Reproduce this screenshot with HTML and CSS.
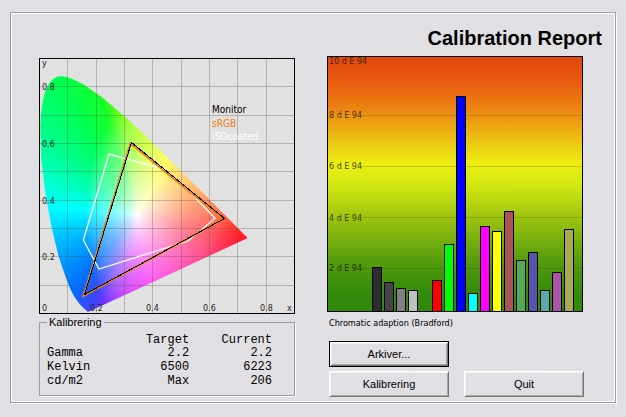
FILE: index.html
```html
<!DOCTYPE html>
<html lang="en">
<head>
<meta charset="utf-8">
<title>Calibration Report</title>
<link rel="stylesheet" href="styles.css">
</head>
<body>
<main class="frame">
  <h1 class="title">Calibration Report</h1>
  <div class="columns">
    <section class="column column-left">
      <svg class="chart" viewBox="0 0 256 256" role="img" aria-label="Chromaticity diagram">
        <defs>
          <clipPath id="locus">
            <path d="M49 254L46.7 252L44.5 250L41 246.6L35.2 238.6L31 230.3L26 217.3L19.5 198L13 171L6.7 137.8L2.3 102L1.3 69Q1.7 54 4 42Q6.5 30 11 24.4Q15.5 18.5 21 18.2Q26 18 32.4 20.4L44 26L65 40.8L85.7 58.4L106 77.6L126 97.5L145.5 116.8L163.4 134.5L178 149.2L208.7 180Z"/>
          </clipPath>
        </defs>
        <rect class="gamut-back" width="256" height="256"/>
        <g clip-path="url(#locus)">
          <foreignObject width="256" height="256"><div class="spectrum"></div></foreignObject>
        </g>
        <path class="grid" d="M28.5 0V256M57.5 0V256M85.5 0V256M113.5 0V256M142.5 0V256M170.5 0V256M198.5 0V256M227.5 0V256M0 28.5H256M0 57.5H256M0 85.5H256M0 113.5H256M0 142.5H256M0 170.5H256M0 198.5H256M0 227.5H256"/>
        <path class="iso" d="M70 96L44.300 182L60 211L149 183L176 160.300L146 129L121 110Z"/>
        <path class="srgb" d="M91.500 85.500L184 161L44.500 238Z"/>
        <path class="monitor" d="M92.500 84.500L185.500 160.500L45.500 236.500Z"/>
        <g class="axis">
          <text x="3" y="8">y</text>
          <text x="3" y="32">0.8</text>
          <text x="3" y="89">0.6</text>
          <text x="3" y="146">0.4</text>
          <text x="3" y="202">0.2</text>
          <text x="3" y="253">0</text>
          <text x="51" y="253">0.2</text>
          <text x="107" y="253">0.4</text>
          <text x="164" y="253">0.6</text>
          <text x="221" y="253">0.8</text>
          <text x="248" y="253">x</text>
        </g>
        <g class="legend">
          <text x="173" y="55">Monitor</text>
          <text class="legend-srgb" x="173" y="69">sRGB</text>
          <text class="legend-iso" x="173" y="82">ISOcoated</text>
        </g>
        <rect class="border" x=".5" y=".5" width="255" height="255"/>
      </svg>
      <fieldset class="group">
        <legend>Kalibrering</legend>
        <table class="values">
          <thead><tr><td></td><th scope="col">Target</th><th scope="col">Current</th></tr></thead>
          <tbody>
            <tr><th scope="row">Gamma</th><td>2.2</td><td>2.2</td></tr>
            <tr><th scope="row">Kelvin</th><td>6500</td><td>6223</td></tr>
            <tr><th scope="row">cd/m2</th><td>Max</td><td>206</td></tr>
          </tbody>
        </table>
      </fieldset>
    </section>
    <section class="column">
      <svg class="chart" viewBox="0 0 256 256" role="img" aria-label="Colour difference chart">
        <defs>
          <linearGradient id="scale" x1="0" y1="0" x2="0" y2="1">
            <stop offset="0" stop-color="#df4710"/>
            <stop offset=".1" stop-color="#ea5a10"/>
            <stop offset=".22" stop-color="#ec8b12"/>
            <stop offset=".33" stop-color="#ecc412"/>
            <stop offset=".42" stop-color="#ecee12"/>
            <stop offset=".5" stop-color="#d4e912"/>
            <stop offset=".63" stop-color="#9ec410"/>
            <stop offset=".8" stop-color="#559c0d"/>
            <stop offset=".93" stop-color="#328a0c"/>
            <stop offset="1" stop-color="#328a0c"/>
          </linearGradient>
        </defs>
        <rect width="256" height="256" fill="url(#scale)"/>
        <path class="levels" d="M32 59.500H256M32 110.500H256M32 161.500H256M32 212.500H256"/>
        <g class="axis axis-levels">
          <text x="2" y="8">10 d E 94</text>
          <text x="2" y="62">8 d E 94</text>
          <text x="2" y="113">6 d E 94</text>
          <text x="2" y="165">4 d E 94</text>
          <text x="2" y="215">2 d E 94</text>
        </g>
        <g class="bars">
          <rect x="45.500" y="211.500" width="9" height="44" fill="#2d2d2d"/>
          <rect x="57.500" y="226.500" width="9" height="29" fill="#444"/>
          <rect x="69.500" y="232.500" width="9" height="23" fill="#818181"/>
          <rect x="81.500" y="234.500" width="9" height="21" fill="#c0c0c0"/>
          <rect x="105.500" y="224.500" width="9" height="31" fill="#f00"/>
          <rect x="117.500" y="188.500" width="9" height="67" fill="#0f0"/>
          <rect x="129.500" y="40.500" width="9" height="215" fill="#00f"/>
          <rect x="141.500" y="237.500" width="9" height="18" fill="#0ff"/>
          <rect x="153.500" y="170.500" width="9" height="85" fill="#f0f"/>
          <rect x="165.500" y="175.500" width="9" height="80" fill="#ff0"/>
          <rect x="177.500" y="155.500" width="9" height="100" fill="#aa5555"/>
          <rect x="189.500" y="204.500" width="9" height="51" fill="#55aa55"/>
          <rect x="201.500" y="196.500" width="9" height="59" fill="#5555aa"/>
          <rect x="213.500" y="234.500" width="9" height="21" fill="#55aaaa"/>
          <rect x="225.500" y="216.500" width="9" height="39" fill="#aa55aa"/>
          <rect x="237.500" y="173.500" width="9" height="82" fill="#aaaa55"/>
        </g>
        <rect class="border" x=".5" y=".5" width="255" height="255"/>
      </svg>
      <p class="caption">Chromatic adaption (Bradford)</p>
      <div class="buttons">
        <button class="button button-default" type="button">Arkiver...</button>
        <button class="button button-second" type="button">Kalibrering</button>
        <button class="button" type="button">Quit</button>
      </div>
    </section>
  </div>
</main>
</body>
</html>
```
FILE: styles.css
```css
* {
  box-sizing: border-box;
}

body {
  margin: 0;
  padding: 12px 10px;
  background: #e0dfe3;
  color: #000;
  font: 11px/14px "Liberation Sans", Arial, sans-serif;
}

.frame {
  border: 1px solid #9d9da1;
  outline: 1px solid #fff;
  outline-offset: -2px;
  box-shadow: 1px 1px #fff;
  padding: 12px 13px 5px 28px;
}

.title {
  margin: 0 0 5px;
  font-size: 20px;
  line-height: 26px;
  text-align: right;
}

.columns {
  display: grid;
  grid-template-columns: 1fr 1fr;
  gap: 32px;
  padding-right: 19px;
}

.column-left {
  padding-top: 2px;
}

.chart {
  display: block;
  width: 100%;
  height: auto;
}

.gamut-back {
  fill: #e1e1e1;
}

.spectrum {
  width: 256px;
  height: 256px;
  background:
    radial-gradient(ellipse 52px 112px at 98px 157px, #fff 0, rgba(255, 255, 255, .76) 16%, rgba(255, 255, 255, .48) 45%, rgba(255, 255, 255, .26) 75%, transparent 100%) 0 0 / 98px 256px no-repeat,
    radial-gradient(ellipse 104px 112px at 0 157px, #fff 0, rgba(255, 255, 255, .76) 16%, rgba(255, 255, 255, .48) 45%, rgba(255, 255, 255, .26) 75%, transparent 100%) 98px 0 / 158px 256px no-repeat,
    conic-gradient(from 0deg at 98px 157px,
      #a0ff00 0deg, #d8ff00 15deg, #ffff00 29deg, #ffc010 48deg, #ff8c18 66deg,
      #ff4c20 88deg, #ff1c28 102deg, #ff0a64 122deg, #ff00b4 148deg,
      #fa00f0 168deg, #c800ff 186deg, #8228ff 198deg, #3c46ff 207deg,
      #006eff 220deg, #0096ff 236deg, #00c8ff 256deg, #00ffff 276deg,
      #00ffb4 298deg, #00ff50 330deg, #14ff28 343deg, #64ff14 350deg, #a0ff00 360deg);
}

.grid {
  fill: none;
  stroke: rgba(90, 85, 70, .32);
}

.iso,
.srgb,
.monitor {
  fill: none;
  stroke: #fff;
}

.iso {
  stroke-width: 1.3;
}

.srgb {
  stroke: #f08010;
  stroke-width: 2px;
}

.monitor {
  stroke: #000;
  shape-rendering: crispEdges;
}

.axis {
  fill: #26261c;
  font: 8px "DejaVu Sans", sans-serif;
}

.axis-levels {
  fill: rgba(20, 20, 0, .8);
}

.legend {
  font: 10px "DejaVu Sans Condensed", "DejaVu Sans", sans-serif;
}

.legend-srgb {
  fill: #f08010;
}

.legend-iso {
  fill: #fff;
}

.border {
  fill: none;
  stroke: #000;
}

.levels {
  stroke: rgba(60, 60, 0, .22);
}

.bars {
  stroke: #000;
}

.group {
  margin: 1px 0 0;
  padding: 5px 22px 7px 7px;
  border: 1px solid #9d9da1;
  box-shadow: 1px 1px #fff;
}

.group legend {
  padding: 0 2px;
}

.values {
  width: 100%;
  border-collapse: collapse;
  font: 12px/14px "Liberation Mono", "Courier New", monospace;
}

.values th,
.values td {
  padding: 0;
  font-weight: 400;
  text-align: right;
}

.values thead {
  line-height: 12px;
}

.values tbody th {
  text-align: left;
}

.caption {
  margin: 4px 2px 11px;
  font: 9px/14px "DejaVu Sans Condensed", "DejaVu Sans", sans-serif;
}

.buttons {
  display: grid;
  grid-template-columns: 1fr 1fr;
  gap: 4px 15px;
  margin: 0 -1px 0 2px;
}

.button {
  height: 26px;
  padding: 0;
  border: 1px solid;
  border-color: #fff #77776f #77776f #fff;
  box-shadow: inset 1px 1px #f4f3ee, inset -1px -1px #a9a89f;
  background: #e0dfe3;
  color: #000;
  font: 11px "Liberation Sans", Arial, sans-serif;
}

.button-default {
  border-color: #000;
  box-shadow: inset 1px 1px #fff, inset -1px -1px #77776f, inset 2px 2px #f4f3ee, inset -2px -2px #a9a89f;
}

.button-second {
  grid-column: 1;
}
```
